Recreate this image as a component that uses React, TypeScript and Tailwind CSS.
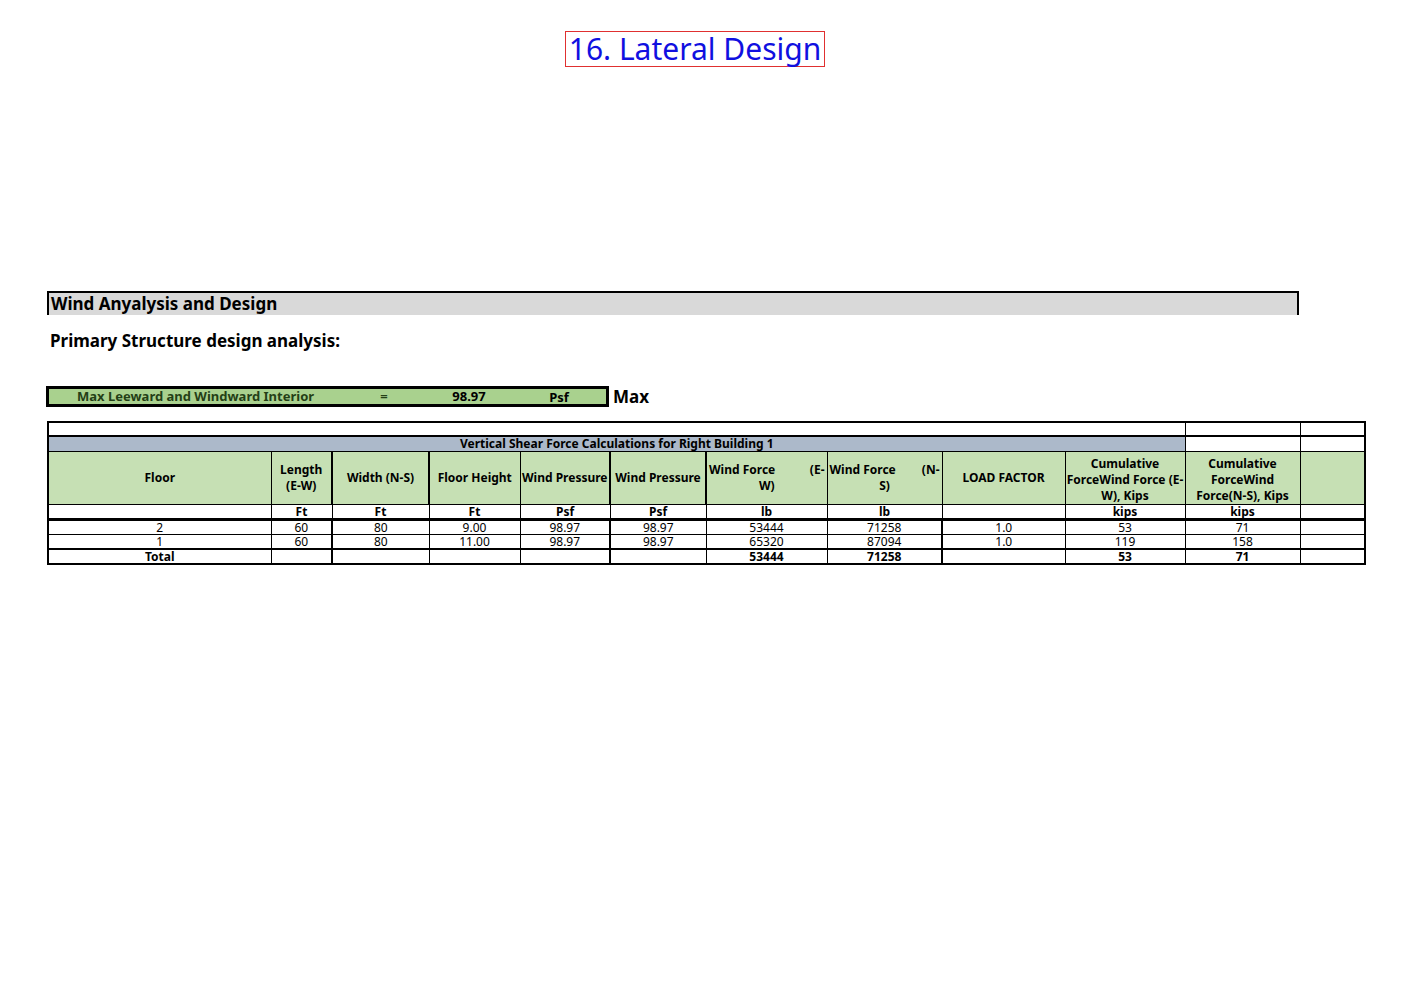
const widths = [223, 61, 97, 91, 90, 96, 121, 115, 123, 120, 115, 65];

const header = [
  "Floor",
  "Length (E-W)",
  "Width (N-S)",
  "Floor Height",
  "Wind Pressure",
  "Wind Pressure",
  "WF_EW",
  "WF_NS",
  "LOAD FACTOR",
  "Cumulative ForceWind Force (E-W), Kips",
  "Cumulative ForceWind Force(N-S), Kips",
  "",
];
const units = ["", "Ft", "Ft", "Ft", "Psf", "Psf", "lb", "lb", "", "kips", "kips", ""];
const rows = [
  ["2", "60", "80", "9.00", "98.97", "98.97", "53444", "71258", "1.0", "53", "71", ""],
  ["1", "60", "80", "11.00", "98.97", "98.97", "65320", "87094", "1.0", "119", "158", ""],
];
const total = ["Total", "", "", "", "", "", "53444", "71258", "", "53", "71", ""];

const td = "border border-black p-0 text-center align-middle";

export default function App() {
  return (
    <div className="relative min-h-[992px] w-[1403px] bg-white font-[family-name:'Liberation_Sans',Arial,sans-serif] text-black">
      <div className="flex justify-center pt-[31px]">
        <div className="ml-[-13px] flex h-[36px] items-center border border-[#e03030] px-[3px] text-[30px] leading-none text-[#1010e0]">
          16. Lateral Design
        </div>
      </div>

      <div className="ml-[47px] mt-[224px] flex h-[24px] w-[1252px] items-center border-x-2 border-t-2 border-black bg-[#d9d9d9] pl-[2px] text-[17px] font-bold">
        Wind Anyalysis and Design
      </div>
      <div className="ml-[50px] mt-[15px] text-[17px] font-bold leading-[22px]">Primary Structure design analysis:</div>

      <div className="ml-[46px] mt-[34px] flex items-end">
        <div className="flex h-[21px] w-[563px] items-center border-[3px] border-black bg-[#a9d18e] text-[13px] font-bold">
          <span className="w-[300px] pl-[28px] font-[family-name:'Liberation_Serif',serif] text-[#243f16]">Max Leeward and Windward Interior</span>
          <span className="w-[70px] text-center text-[#243f16]">=</span>
          <span className="w-[100px] text-center">98.97</span>
          <span className="w-[80px] pt-[2px] text-center">Psf</span>
        </div>
        <div className="ml-[4px] pb-[2px] text-[17px] font-bold leading-none">Max</div>
      </div>

      <table className="ml-[47px] mt-[14px] table-fixed border-collapse border-2 border-black text-[12px] leading-[13px]">
        <colgroup>
          {widths.map((w, i) => (
            <col key={i} style={{ width: w }} />
          ))}
        </colgroup>
        <tbody>
          <tr className="h-[14px] border-b-2 border-black">
            <td colSpan={10} className={td}></td>
            <td className={td}></td>
            <td className={td}></td>
          </tr>
          <tr className="h-[15px]">
            <td colSpan={10} className={`${td} bg-[#acb9ca] font-bold`}>
              Vertical Shear Force Calculations for Right Building 1
            </td>
            <td className={td}></td>
            <td className={td}></td>
          </tr>
          <tr className="h-[46px] bg-[#c6e0b4] font-bold">
            {header.map((h, i) =>
              h === "WF_EW" || h === "WF_NS" ? (
                <td key={i} className={`${td} px-[2px]`}>
                  <div className="flex justify-between leading-[16px]">
                    <span>Wind Force</span>
                    <span>{h === "WF_EW" ? "(E-" : "(N-"}</span>
                  </div>
                  <div className="text-center leading-[16px]">{h === "WF_EW" ? "W)" : "S)"}</div>
                </td>
              ) : (
                <td key={i} className={`${td} ${i === 9 || i === 10 ? "pt-[4px]" : ""} ${i === 2 || i === 5 ? "border-x-2" : ""}`}>
                  <div className="leading-[16px]">{h}</div>
                </td>
              )
            )}
          </tr>
          <tr className="h-[15px] border-b-[3px] border-black font-bold">
            {units.map((u, i) => (
              <td key={i} className={td}>{u}</td>
            ))}
          </tr>
          {rows.map((r, ri) => (
            <tr key={ri} className="h-[15px]">
              {r.map((c, i) => (
                <td key={i} className={`${td} ${i === 2 || i === 5 || i === 8 ? "border-l-2" : ""}`}>{c}</td>
              ))}
            </tr>
          ))}
          <tr className="h-[15px] border-t-2 border-black font-bold">
            {total.map((c, i) => (
              <td key={i} className={`${td} ${i === 2 || i === 5 || i === 8 ? "border-l-2" : ""}`}>{c}</td>
            ))}
          </tr>
        </tbody>
      </table>
    </div>
  );
}
